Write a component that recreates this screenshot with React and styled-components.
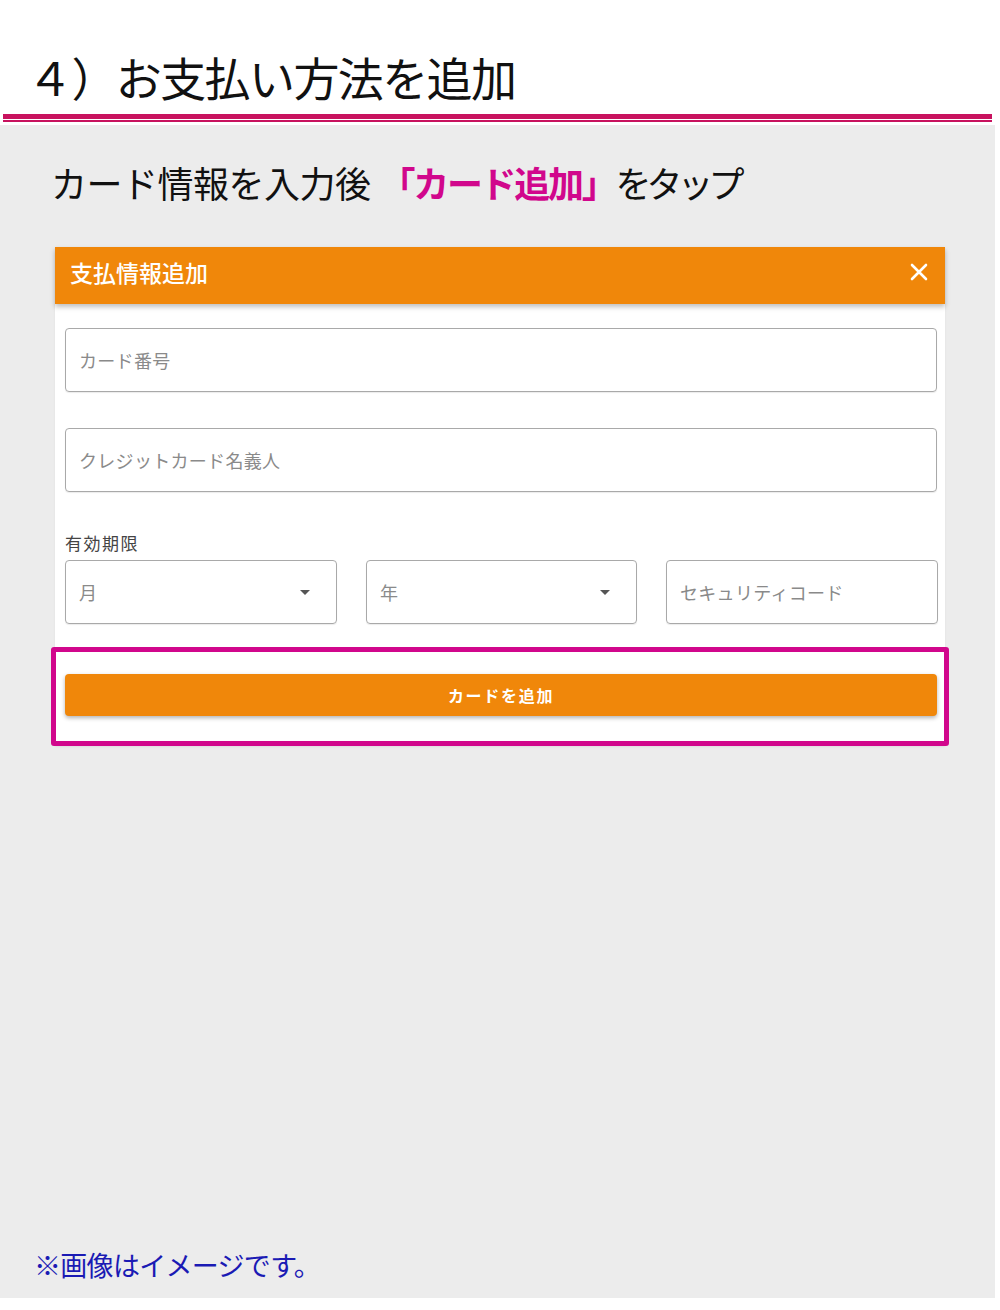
import React from 'react';
import styled, { createGlobalStyle } from 'styled-components';

const GlobalStyle = createGlobalStyle`
  html, body {
    margin: 0;
    padding: 0;
    background: #fff;
  }
  body {
    font-family: "Noto Sans CJK JP", "Noto Sans", sans-serif;
  }
`;

const Page = styled.div`
  width: 1000px;
  height: 1310px;
  background: #fff;
  display: flex;
  flex-direction: column;
`;

const Header = styled.header`
  height: 114px;
  padding-left: 27px;
  display: flex;
  align-items: flex-end;
`;

const Heading = styled.h1`
  margin: 0 0 15px;
  font-size: 46px;
  font-weight: 400;
  letter-spacing: -1.6px;
  line-height: 1;
  color: #111;
`;

const Rule = styled.div`
  margin: 0 8px 0 3px;
  height: 1px;
  background: #fff;
  border-top: 5px solid #c8125e;
  border-bottom: 2px solid #c8125e;
`;

const Panel = styled.main`
  margin-top: 3px;
  margin-right: 5px;
  height: 1173px;
  background: #ececec;
  display: flex;
  flex-direction: column;
  padding: 36px 0 0 51px;
  box-sizing: border-box;
`;

const Lead = styled.p`
  margin: 0;
  font-size: 36px;
  letter-spacing: -0.5px;
  line-height: 1.2;
  color: #111;
`;

const Accent = styled.strong`
  color: #d1078c;
  font-weight: 700;
  letter-spacing: -2.3px;
  margin-left: 9px;
`;

const Tail = styled.span`
  letter-spacing: -5px;
`;

const Modal = styled.section`
  margin: 43px 0 0 4px;
  width: 890px;
  background: #fff;
  position: relative;
  box-shadow: 0 1px 2px rgba(0, 0, 0, 0.06);
`;

const ModalBar = styled.div`
  height: 57px;
  box-sizing: border-box;
  background: #f0870a;
  display: flex;
  align-items: center;
  justify-content: space-between;
  padding: 0 16px 8px 15px;
  box-shadow: 0 3px 5px rgba(0, 0, 0, 0.25);
  position: relative;
  z-index: 1;
`;

const ModalTitle = styled.h2`
  margin: 0;
  font-size: 23px;
  font-weight: 500;
  letter-spacing: 0;
  color: #fff;
`;

const Close = styled.span`
  width: 20px;
  height: 20px;
  display: flex;
  align-items: center;
  justify-content: center;
`;

const Body = styled.div`
  padding: 24px 8px 30px 10px;
  display: flex;
  flex-direction: column;
`;

const Field = styled.div`
  height: 64px;
  border: 1px solid #a9a9a9;
  border-radius: 4px;
  box-sizing: border-box;
  display: flex;
  align-items: center;
  justify-content: space-between;
  padding: 0 26px 0 13px;
  color: #8a8a8a;
  font-size: 18px;
  letter-spacing: 0.3px;
  margin-bottom: ${(p) => p.$gap || 0}px;
  box-shadow: 0 1px 1px rgba(0, 0, 0, 0.08);
`;

const Label = styled.div`
  font-size: 17px;
  color: #444;
  letter-spacing: 1.5px;
  margin: 0 0 5px;
`;

const Row = styled.div`
  display: grid;
  grid-template-columns: 272px 271px 272px;
  column-gap: 29px;
`;

const Caret = styled.span`
  width: 0;
  height: 0;
  border-left: 5px solid transparent;
  border-right: 5px solid transparent;
  border-top: 5px solid #555;
`;

const Highlight = styled.div`
  position: absolute;
  left: -4px;
  top: 400px;
  width: 898px;
  height: 99px;
  border: 5px solid #d1078c;
  border-radius: 3px;
  box-sizing: border-box;
`;

const AddButton = styled.button`
  margin-top: 50px;
  height: 42px;
  border: none;
  border-radius: 4px;
  background: #f0870a;
  color: #fff;
  font-family: inherit;
  font-size: 16px;
  font-weight: 700;
  letter-spacing: 1.7px;
  box-shadow: 0 2px 4px rgba(0, 0, 0, 0.3);
`;

const Note = styled.p`
  margin: auto 0 14px -17px;
  font-size: 27px;
  letter-spacing: -0.7px;
  color: #1a1ab4;
`;

export default function App() {
  return (
    <Page>
      <GlobalStyle />
      <Header>
        <Heading>４）お支払い方法を追加</Heading>
      </Header>
      <Rule />
      <Panel>
        <Lead>
          カード情報を入力後<Accent>「カード追加」</Accent>
          <Tail>をタップ</Tail>
        </Lead>
        <Modal>
          <ModalBar>
            <ModalTitle>支払情報追加</ModalTitle>
            <Close>
              <svg width="18" height="18" viewBox="0 0 18 18">
                <path d="M2 2L16 16M16 2L2 16" stroke="#fff" strokeWidth="2.6" strokeLinecap="round" />
              </svg>
            </Close>
          </ModalBar>
          <Body>
            <Field $gap={36}>カード番号</Field>
            <Field $gap={38}>クレジットカード名義人</Field>
            <Label>有効期限</Label>
            <Row>
              <Field>
                月<Caret />
              </Field>
              <Field>
                年<Caret />
              </Field>
              <Field>セキュリティコード</Field>
            </Row>
            <AddButton>カードを追加</AddButton>
          </Body>
          <Highlight />
        </Modal>
        <Note>※画像はイメージです。</Note>
      </Panel>
    </Page>
  );
}
